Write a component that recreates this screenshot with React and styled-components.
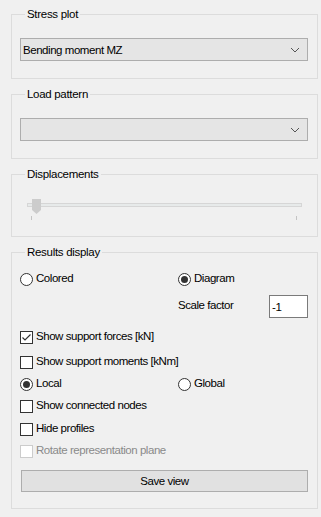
import React from 'react'
import styled, { createGlobalStyle } from 'styled-components'

const GlobalStyle = createGlobalStyle`
  html, body {
    margin: 0;
    padding: 0;
    background: #f0f0f0;
  }
  body {
    font-family: 'Liberation Sans', Arial, sans-serif;
    font-size: 11.5px;
    color: #000000;
    letter-spacing: -0.45px;
  }
`

const Panel = styled.div`
  width: 321px;
  height: 517px;
  box-sizing: border-box;
  padding: 7px 3px 0 11px;
  display: flex;
  flex-direction: column;
  gap: 8px;
  overflow: hidden;
`

const Group = styled.fieldset`
  margin: 0;
  min-width: 0;
  border: 1px solid #dcdcdc;
  padding: ${(p) => p.$pad || '16px 9px 17px 8px'};
`

const Legend = styled.legend`
  padding: 0 2px;
  margin-left: 5px;
  line-height: 15px;
  height: 15px;
  letter-spacing: -0.3px;
`

const Combo = styled.div`
  height: 23px;
  box-sizing: border-box;
  border: 1px solid #adadad;
  background: #e5e5e5;
  display: flex;
  align-items: center;
  padding: 0 4px 0 2px;
`

const ComboText = styled.span`
  flex: 1;
  white-space: nowrap;
`

const Chevron = () => (
  <svg width="10" height="6" viewBox="0 0 10 6" style={{ marginRight: 3 }}>
    <path d="M1 1 L5 5 L9 1" fill="none" stroke="#555" strokeWidth="1" />
  </svg>
)

const Slider = styled.div`
  position: relative;
  height: 24px;
  margin: 0 6px 0 7px;
`

const Track = styled.div`
  position: absolute;
  left: 0;
  right: 0;
  top: 5px;
  height: 4px;
  box-sizing: border-box;
  border: 1px solid #d6d6d6;
  background: #e7eaea;
`

const Thumb = styled.svg`
  position: absolute;
  left: 5px;
  top: 1px;
`

const Tick = styled.div`
  position: absolute;
  top: 18px;
  width: 1px;
  height: 4px;
  background: #c4c4c4;
  left: ${(p) => p.$left};
`

const Row = styled.div`
  display: flex;
  align-items: center;
  height: ${(p) => p.$h || '13px'};
  margin-top: ${(p) => p.$mt || '0px'};
`

const Cell = styled.div`
  display: flex;
  align-items: center;
  width: ${(p) => p.$w || 'auto'};
  flex: ${(p) => (p.$w ? 'none' : '1')};
`

const Label = styled.span`
  margin-left: 3px;
  white-space: nowrap;
  color: ${(p) => (p.$disabled ? '#8a8a8a' : '#000')};
  line-height: 13px;
  margin-top: -2px;
`

const Box = styled.span`
  width: 13px;
  height: 13px;
  box-sizing: border-box;
  border: 1px solid ${(p) => (p.$disabled ? '#cccccc' : '#333333')};
  background: #ffffff;
  flex: none;
  display: flex;
  align-items: center;
  justify-content: center;
`

const Circle = styled.span`
  width: 13px;
  height: 13px;
  box-sizing: border-box;
  border: 1px solid #333333;
  border-radius: 50%;
  background: #ffffff;
  flex: none;
  display: flex;
  align-items: center;
  justify-content: center;
  &::after {
    content: '';
    display: ${(p) => (p.$on ? 'block' : 'none')};
    width: 7px;
    height: 7px;
    border-radius: 50%;
    background: #333333;
  }
`

const Check = ({ on, disabled, children }) => (
  <>
    <Box $disabled={disabled}>
      {on && (
        <svg width="11" height="11" viewBox="0 0 11 11">
          <path d="M1.5 5.5 L4 8 L9.5 2.5" fill="none" stroke="#333" strokeWidth="1.2" />
        </svg>
      )}
    </Box>
    <Label $disabled={disabled}>{children}</Label>
  </>
)

const Radio = ({ on, children }) => (
  <>
    <Circle $on={on} />
    <Label>{children}</Label>
  </>
)

const TextBox = styled.div`
  width: 39px;
  height: 23px;
  box-sizing: border-box;
  border: 1px solid #7a7a7a;
  background: #ffffff;
  display: flex;
  align-items: center;
  padding-left: 2px;
  margin-left: auto;
`

const Button = styled.div`
  height: 22px;
  box-sizing: border-box;
  border: 1px solid #adadad;
  background: #e1e1e1;
  display: flex;
  align-items: center;
  justify-content: center;
  margin: 12px 0 0 1px;
`

export default function App() {
  return (
    <>
      <GlobalStyle />
      <Panel>
        <Group>
          <Legend>Stress plot</Legend>
          <Combo>
            <ComboText>Bending moment MZ</ComboText>
            <Chevron />
          </Combo>
        </Group>
        <Group>
          <Legend>Load pattern</Legend>
          <Combo>
            <ComboText />
            <Chevron />
          </Combo>
        </Group>
        <Group $pad="16px 9px 14px 8px">
          <Legend>Displacements</Legend>
          <Slider>
            <Track />
            <Thumb width="9" height="15" viewBox="0 0 9 15">
              <path d="M0 0 H9 V11 L4.5 15 L0 11 Z" fill="#cccccc" />
            </Thumb>
            <Tick $left="4px" />
            <Tick $left="269px" />
          </Slider>
        </Group>
        <Group $pad="13px 9px 16px 8px">
          <Legend>Results display</Legend>
          <Row>
            <Cell $w="158px">
              <Radio>Colored</Radio>
            </Cell>
            <Cell>
              <Radio on>Diagram</Radio>
            </Cell>
          </Row>
          <Row $h="23px" $mt="9px">
            <Cell $w="158px" />
            <Cell>
              <Label style={{ marginLeft: 0 }}>Scale factor</Label>
              <TextBox>-1</TextBox>
            </Cell>
          </Row>
          <Row $mt="13px">
            <Check on>Show support forces [kN]</Check>
          </Row>
          <Row $mt="12px">
            <Check>Show support moments [kNm]</Check>
          </Row>
          <Row $mt="9px">
            <Cell $w="158px">
              <Radio on>Local</Radio>
            </Cell>
            <Cell>
              <Radio>Global</Radio>
            </Cell>
          </Row>
          <Row $mt="9px">
            <Check>Show connected nodes</Check>
          </Row>
          <Row $mt="10px">
            <Check>Hide profiles</Check>
          </Row>
          <Row $mt="9px">
            <Check disabled>Rotate representation plane</Check>
          </Row>
          <Button>Save view</Button>
        </Group>
      </Panel>
    </>
  )
}
